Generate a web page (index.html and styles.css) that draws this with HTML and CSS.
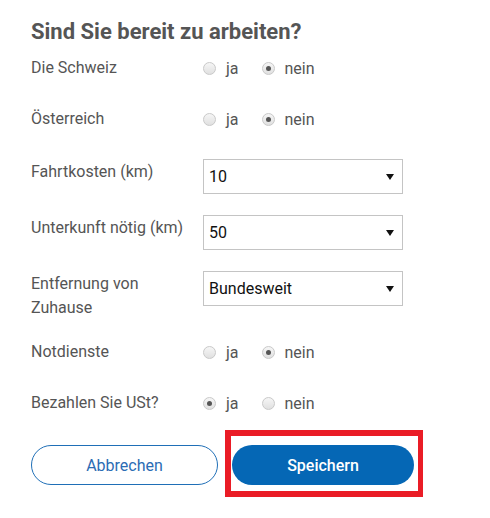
FILE: index.html
```html
<!DOCTYPE html>
<html lang="de">
<head>
<meta charset="utf-8">
<link rel="stylesheet" href="styles.css">
</head>
<body>
<form class="page">
  <h1 class="title">Sind Sie bereit zu arbeiten?</h1>
  <div class="rows">
    <div class="row row-radio">
      <span class="label">Die Schweiz</span>
      <div class="options">
        <span class="opt"><span class="radio"></span>ja</span>
        <span class="opt"><span class="radio checked"></span>nein</span>
      </div>
    </div>
    <div class="row row-radio">
      <span class="label">Österreich</span>
      <div class="options">
        <span class="opt"><span class="radio"></span>ja</span>
        <span class="opt"><span class="radio checked"></span>nein</span>
      </div>
    </div>
    <div class="row row-select">
      <span class="label">Fahrtkosten (km)</span>
      <div class="select"><span class="value">10</span><svg class="arrow" width="8" height="6" viewBox="0 0 8 6"><path d="M0 0H8L4 6Z" fill="#111"/></svg></div>
    </div>
    <div class="row row-select">
      <span class="label">Unterkunft nötig (km)</span>
      <div class="select"><span class="value">50</span><svg class="arrow" width="8" height="6" viewBox="0 0 8 6"><path d="M0 0H8L4 6Z" fill="#111"/></svg></div>
    </div>
    <div class="row row-select">
      <span class="label">Entfernung von<br>Zuhause</span>
      <div class="select"><span class="value">Bundesweit</span><svg class="arrow" width="8" height="6" viewBox="0 0 8 6"><path d="M0 0H8L4 6Z" fill="#111"/></svg></div>
    </div>
    <div class="row row-radio">
      <span class="label">Notdienste</span>
      <div class="options">
        <span class="opt"><span class="radio"></span>ja</span>
        <span class="opt"><span class="radio checked"></span>nein</span>
      </div>
    </div>
    <div class="row row-radio">
      <span class="label">Bezahlen Sie USt?</span>
      <div class="options">
        <span class="opt"><span class="radio checked"></span>ja</span>
        <span class="opt"><span class="radio"></span>nein</span>
      </div>
    </div>
  </div>
  <div class="buttons">
    <button type="button" class="btn btn-outline">Abbrechen</button>
    <span class="highlight"><button type="button" class="btn btn-primary">Speichern</button></span>
  </div>
</form>
</body>
</html>
```
FILE: styles.css
```css
html, body {
  margin: 0;
  padding: 0;
  background: #fff;
}
body {
  font-family: Roboto, "Liberation Sans", Arial, sans-serif;
  color: #555;
  font-size: 16px;
  min-height: 518px;
}
.page {
  padding: 18px 0 40px 31px;
  width: 383px;
}
.title {
  margin: 0 0 10px;
  font-size: 22px;
  line-height: 28px;
  font-weight: 700;
  color: #555;
}
.rows {
  display: flex;
  flex-direction: column;
  gap: 20px;
}
.row {
  display: grid;
  grid-template-columns: 172px 200px;
  align-items: start;
}
.row-radio {
  height: 31px;
}
.label {
  line-height: 24px;
}
.row-select .label {
  padding-top: 2px;
}
.options {
  display: flex;
  align-items: center;
  height: 24px;
  gap: 23px;
}
.opt {
  display: inline-flex;
  align-items: center;
  gap: 10px;
}
.radio {
  width: 11px;
  height: 11px;
  border: 1px solid #c9c9c9;
  border-radius: 50%;
  background: linear-gradient(#f6f6f6, #e0e0e0);
  position: relative;
  box-sizing: content-box;
}
.radio.checked::after {
  content: "";
  position: absolute;
  left: 3px;
  top: 3px;
  width: 5px;
  height: 5px;
  border-radius: 50%;
  background: #555;
}
.row-select .select {
  margin-top: 1px;
}
.select {
  height: 33px;
  border: 1px solid #c4c4c4;
  display: flex;
  align-items: center;
  justify-content: space-between;
  padding: 0 8px 0 5px;
  color: #111;
  font-size: 16px;
  background: #fff;
}
.value {
  line-height: 33px;
}
.arrow {
  display: block;
}
.buttons {
  display: flex;
  gap: 14px;
  margin-top: 23px;
}
.btn {
  height: 40px;
  border-radius: 20px;
  font-family: Roboto, "Liberation Sans", Arial, sans-serif;
  font-size: 16px;
  cursor: pointer;
  box-sizing: border-box;
}
.btn-outline {
  width: 187px;
  background: #fff;
  border: 1px solid #1f6fb7;
  color: #2b6cb4;
}
.btn-primary {
  width: 182px;
  background: #0567b5;
  border: none;
  color: #fff;
  font-weight: 500;
  display: block;
}
.highlight {
  position: relative;
  display: block;
}
.highlight::after {
  content: "";
  position: absolute;
  left: -7px;
  top: -15px;
  right: -9px;
  bottom: -12px;
  border: 6px solid #ea1c26;
  border-right-width: 5px;
  pointer-events: none;
}
```
